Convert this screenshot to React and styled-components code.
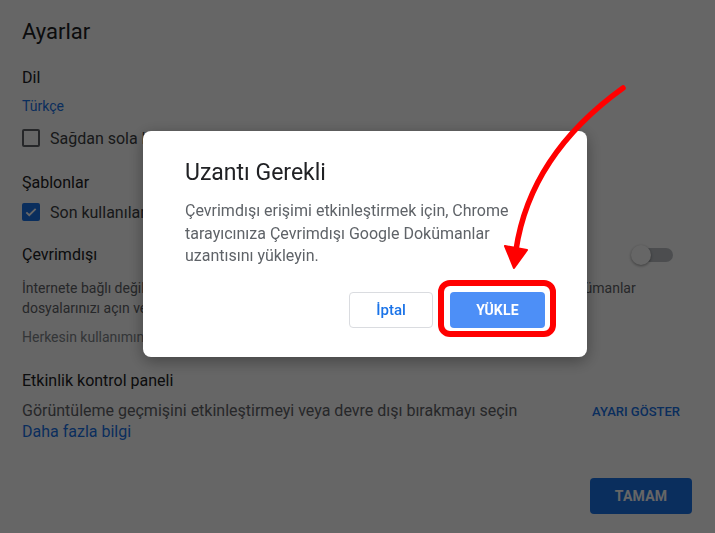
import React from 'react';
import styled, { createGlobalStyle } from 'styled-components';

const Global = createGlobalStyle`
  html, body {
    margin: 0;
    padding: 0;
    background: #fff;
  }
  body {
    font-family: Roboto, 'Liberation Sans', Arial, sans-serif;
    color: #202124;
  }
`;

const Page = styled.div`
  width: 715px;
  height: 533px;
  box-sizing: border-box;
  padding: 18px 23px 0 22px;
  display: flex;
  flex-direction: column;
  overflow: hidden;
`;

const PageTitle = styled.h1`
  margin: 0;
  font-family: Roboto, sans-serif;
  font-size: 22px;
  line-height: 28px;
  font-weight: 400;
  color: #202124;
`;

const SectionTitle = styled.h2`
  margin: ${p => p.$top ?? 22}px 0 0;
  font-size: 16px;
  line-height: 20px;
  font-weight: 400;
  color: #202124;
`;

const Link = styled.a`
  display: block;
  margin-top: ${p => p.$top ?? 0}px;
  font-size: ${p => p.$size || 14}px;
  line-height: ${p => p.$lh || 20}px;
  color: #1a73e8;
  text-decoration: none;
`;

const CheckRow = styled.label`
  display: flex;
  align-items: center;
  gap: 10px;
  height: 24px;
  margin-top: ${p => p.$top ?? 0}px;
  font-size: 16px;
  color: #3c4043;
  white-space: nowrap;
`;

const Box = styled.span`
  width: 18px;
  height: 18px;
  box-sizing: border-box;
  border-radius: 2px;
  border: 2px solid ${p => (p.$checked ? '#1a73e8' : '#5f6368')};
  background: ${p => (p.$checked ? '#1a73e8' : 'transparent')};
  display: flex;
  align-items: center;
  justify-content: center;
  flex: none;
`;

const ToggleRow = styled.div`
  display: flex;
  align-items: center;
  justify-content: space-between;
  margin-top: 21px;
  padding-right: 19px;
`;

const Track = styled.span`
  position: relative;
  width: 36px;
  height: 14px;
  border-radius: 7px;
  background: #bdc1c6;
`;

const Knob = styled.span`
  position: absolute;
  left: -6px;
  top: -3px;
  width: 20px;
  height: 20px;
  border-radius: 50%;
  background: #fff;
  box-shadow: 0 1px 3px rgba(0, 0, 0, 0.4);
`;

const Para = styled.p`
  margin: ${p => p.$top ?? 0}px 0 0;
  font-size: 14px;
  line-height: 20px;
  color: ${p => (p.$light ? '#80868b' : '#5f6368')};
  white-space: nowrap;
`;

const DescRow = styled.div`
  display: flex;
  align-items: baseline;
  justify-content: space-between;
  margin-top: 9px;
  padding-right: 12px;
`;

const Desc = styled.div`
  font-size: 16px;
  line-height: 21px;
  color: #5f6368;
`;

const TextButton = styled.span`
  font-size: 13px;
  font-weight: 500;
  color: #1a73e8;
`;

const Footer = styled.div`
  display: flex;
  justify-content: flex-end;
  margin-top: 35px;
`;

const PrimaryButton = styled.button`
  width: ${p => p.$w}px;
  height: 36px;
  border: none;
  border-radius: 4px;
  background: ${p => p.$bg || '#1a73e8'};
  color: #fff;
  font-family: Roboto, sans-serif;
  font-size: 14px;
  font-weight: 700;
  letter-spacing: 0.2px;
  padding: 0;
`;

const Backdrop = styled.div`
  position: fixed;
  inset: 0;
  background: rgba(0, 0, 0, 0.6);
`;

const Dialog = styled.div`
  position: fixed;
  left: 143px;
  top: 131px;
  width: 444px;
  height: 226px;
  box-sizing: border-box;
  padding: 26px 42px 29px 42px;
  background: #fff;
  border-radius: 8px;
  box-shadow: 0 4px 16px rgba(0, 0, 0, 0.35);
  display: flex;
  flex-direction: column;
`;

const DialogTitle = styled.h3`
  margin: 0;
  font-family: Roboto, sans-serif;
  font-size: 23px;
  line-height: 32px;
  font-weight: 400;
  color: #202124;
`;

const DialogText = styled.p`
  margin: 11px 0 0;
  font-size: 16px;
  line-height: 22.5px;
  color: #5f6368;
`;

const Actions = styled.div`
  display: flex;
  justify-content: flex-end;
  gap: 17px;
  margin-top: auto;
`;

const OutlineButton = styled.button`
  width: 84px;
  height: 36px;
  border: 1px solid #dadce0;
  border-radius: 4px;
  background: #fff;
  color: #1a73e8;
  font-family: Roboto, sans-serif;
  font-size: 15px;
  font-weight: 500;
  padding: 0;
`;

const Annotation = styled.svg`
  position: fixed;
  left: 0;
  top: 0;
  pointer-events: none;
`;

const Check = () => (
  <svg width="14" height="14" viewBox="0 0 24 24">
    <path d="M4 12.5l5 5L20 6.5" fill="none" stroke="#fff" strokeWidth="3.2" />
  </svg>
);

export default function App() {
  return (
    <>
      <Global />
      <Page>
        <PageTitle>Ayarlar</PageTitle>

        <SectionTitle>Dil</SectionTitle>
        <Link $top={8}>Türkçe</Link>
        <CheckRow $top={10}>
          <Box />
          Sağdan sola kontrollerini göster
        </CheckRow>

        <SectionTitle $top={23}>Şablonlar</SectionTitle>
        <CheckRow $top={7}>
          <Box $checked>
            <Check />
          </Box>
          Son kullanılan şablonları ana ekranda göster
        </CheckRow>

        <ToggleRow>
          <SectionTitle $top={0} as="div">Çevrimdışı</SectionTitle>
          <Track>
            <Knob />
          </Track>
        </ToggleRow>
        <Para $top={13}>
          İnternete bağlı değilken bu cihazda son kullandığınız Google Dokümanlar, E-Tablolar ve Dokümanlar
          <br />
          dosyalarınızı açın ve düzenleyin.
        </Para>
        <Para $top={9} $light>Herkesin kullanımına açık veya paylaşılan cihazlarda önerilmez</Para>

        <SectionTitle $top={24}>Etkinlik kontrol paneli</SectionTitle>
        <DescRow>
          <Desc>Görüntüleme geçmişini etkinleştirmeyi veya devre dışı bırakmayı seçin</Desc>
          <TextButton>AYARI GÖSTER</TextButton>
        </DescRow>
        <Link $size={16} $lh={22}>Daha fazla bilgi</Link>

        <Footer>
          <PrimaryButton $w={102}>TAMAM</PrimaryButton>
        </Footer>
      </Page>

      <Backdrop />

      <Dialog>
        <DialogTitle>Uzantı Gerekli</DialogTitle>
        <DialogText>
          Çevrimdışı erişimi etkinleştirmek için, Chrome
          <br />
          tarayıcınıza Çevrimdışı Google Dokümanlar
          <br />
          uzantısını yükleyin.
        </DialogText>
        <Actions>
          <OutlineButton>İptal</OutlineButton>
          <PrimaryButton $w={95} $bg="#4d8ff7">YÜKLE</PrimaryButton>
        </Actions>
      </Dialog>

      <Annotation width="715" height="533" viewBox="0 0 715 533">
        <rect x="441" y="283" width="112" height="51" rx="9" fill="none" stroke="#ff0000" strokeWidth="6" />
        <path d="M623 88 Q530 155 516 250" fill="none" stroke="#ff0000" strokeWidth="5.5" strokeLinecap="round" />
        <path d="M505 246 L527 250 L514 268 Z" fill="#ff0000" stroke="#ff0000" strokeWidth="2" strokeLinejoin="round" />
      </Annotation>
    </>
  );
}
